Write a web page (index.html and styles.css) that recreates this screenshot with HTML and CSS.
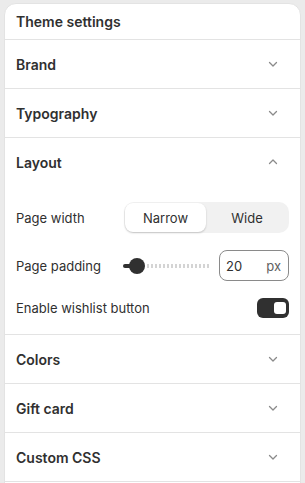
FILE: index.html
```html
<!DOCTYPE html>
<html lang="en">
<head>
  <meta charset="UTF-8" />
  <title>Theme settings</title>
  <link rel="stylesheet" href="styles.css">
</head>
<body>
  <div class="panel">
    <div class="panel-head">Theme settings</div>

    <div class="section">
      <div class="section-title">Brand
        <svg class="chev" viewBox="0 0 20 20"><path d="M6.5 8.5 10 12l3.5-3.5"/></svg>
      </div>
    </div>

    <div class="section">
      <div class="section-title">Typography
        <svg class="chev" viewBox="0 0 20 20"><path d="M6.5 8.5 10 12l3.5-3.5"/></svg>
      </div>
    </div>

    <div class="section">
      <div class="section-title">Layout
        <svg class="chev" viewBox="0 0 20 20"><path d="M6.5 11.5 10 8l3.5 3.5"/></svg>
      </div>
      <div class="section-body">
        <div class="field">
          <span>Page width</span>
          <div class="segmented">
            <button class="seg active">Narrow</button>
            <button class="seg">Wide</button>
          </div>
        </div>
        <div class="field">
          <span>Page padding</span>
          <div class="range-wrap">
            <div class="range">
              <div class="range-fill"></div>
              <div class="range-knob"></div>
              <div class="range-track"></div>
            </div>
            <div class="num-input"><span>20</span><span class="unit">px</span></div>
          </div>
        </div>
        <div class="field">
          <span>Enable wishlist button</span>
          <div class="toggle"><div class="toggle-knob"></div></div>
        </div>
      </div>
    </div>

    <div class="section">
      <div class="section-title">Colors
        <svg class="chev" viewBox="0 0 20 20"><path d="M6.5 8.5 10 12l3.5-3.5"/></svg>
      </div>
    </div>

    <div class="section">
      <div class="section-title">Gift card
        <svg class="chev" viewBox="0 0 20 20"><path d="M6.5 8.5 10 12l3.5-3.5"/></svg>
      </div>
    </div>

    <div class="section">
      <div class="section-title">Custom CSS
        <svg class="chev" viewBox="0 0 20 20"><path d="M6.5 8.5 10 12l3.5-3.5"/></svg>
      </div>
    </div>
  </div>
</body>
</html>
```

FILE: styles.css
```css
* { box-sizing: border-box; margin: 0; padding: 0; }
body { font-family: Inter, 'Noto Sans', sans-serif; background: #ebebeb; color: #303030; padding: 3px 4px 0; overflow: hidden; }
.panel {
  background: #fff; border: 1px solid #e3e3e3; border-radius: 12px 12px 0 0;
  height: 500px; width: 297px;
}
.panel-head {
  height: 36px; padding: 0 11px; display: flex; align-items: center;
  font-size: 14px; font-weight: 600; border-bottom: 1px solid #e3e3e3;
}
.section { border-bottom: 1px solid #e3e3e3; }
.section-title {
  height: 48px; padding: 0 17px 0 11px; display: flex; align-items: center;
  justify-content: space-between; font-size: 14px; font-weight: 600;
}
.chev { width: 20px; height: 20px; fill: none; stroke: #8a8a8a; stroke-width: 1.3; stroke-linecap: round; stroke-linejoin: round; }
.section-body { padding: 16px 11px 16px; display: flex; flex-direction: column; gap: 17px; }
.field { display: flex; align-items: center; justify-content: space-between; font-size: 13px; }
.segmented {
  display: flex; background: #f1f1f1; border-radius: 10px; padding: 1px; width: 165px; height: 31px;
}
.seg {
  flex: 1; border: none; background: transparent; font-family: inherit; font-size: 13px; color: #303030;
  border-radius: 8px;
}
.seg.active { background: #fff; box-shadow: 0 1px 2px rgba(0,0,0,0.2); flex: 0 0 81px; }
.range-wrap { display: flex; align-items: center; gap: 8px; }
.range { width: 88px; height: 16px; display: flex; align-items: center; }
.range-fill { width: 9px; height: 4px; background: #303030; border-radius: 2px 0 0 2px; }
.range-knob { width: 16px; height: 16px; border-radius: 50%; background: #303030; margin-left: -3px; }
.range-track {
  flex: 1; height: 4px; margin-left: 2px;
  background: repeating-linear-gradient(90deg, #d4d4d4 0 2px, transparent 2px 4px);
}
.num-input {
  width: 70px; height: 31px; border: 1px solid #8a8a8a; border-radius: 8px;
  display: flex; align-items: center; justify-content: space-between; padding: 0 7px 0 6px; font-size: 13px;
}
.unit { color: #616161; }
.toggle {
  width: 32px; height: 20px; background: #303030; border-radius: 6px;
  display: flex; align-items: center; justify-content: flex-end; padding: 0 3px;
}
.toggle-knob { width: 12px; height: 12px; background: #fff; border-radius: 3px; }
```
